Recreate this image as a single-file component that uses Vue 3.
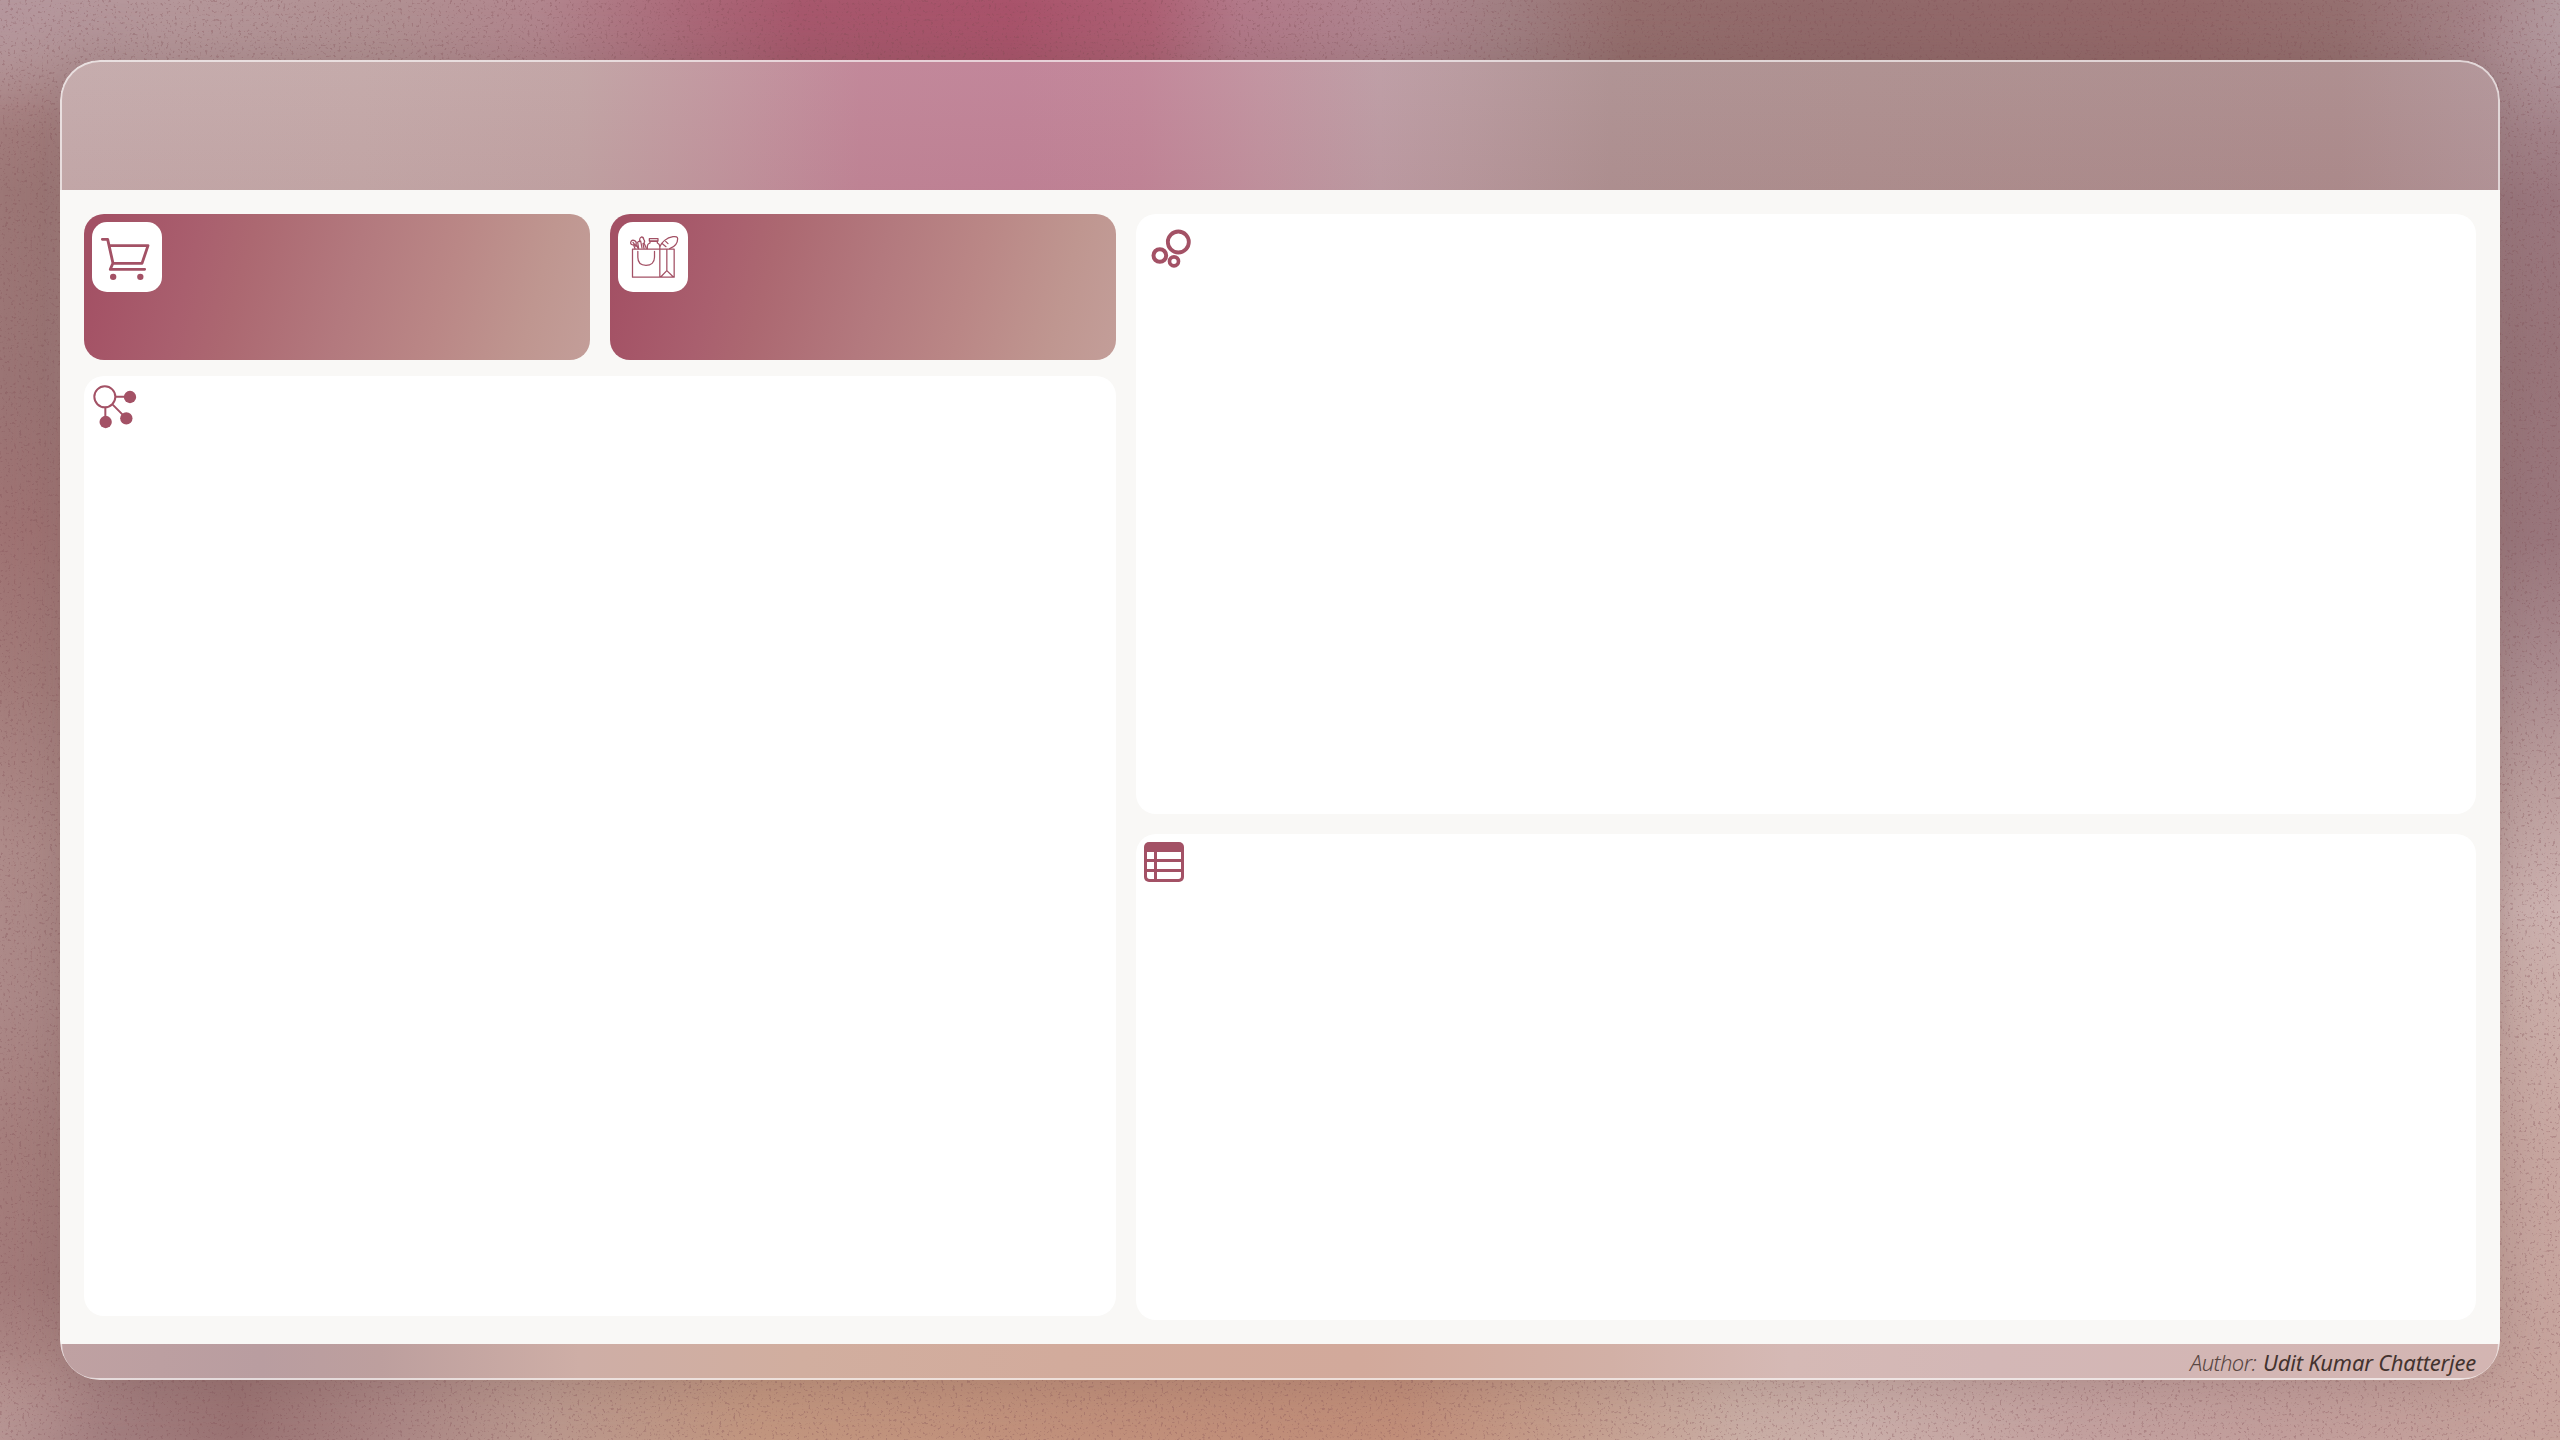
<script setup>
const accent = '#a35165'
</script>

<template>
  <div class="page">
    <div class="backdrop" aria-hidden="true">
      <div class="wash top"></div>
      <div class="wash bottom"></div>
      <div class="wash left"></div>
      <div class="wash right"></div>
      <svg class="grain" width="2560" height="1440">
        <filter id="grain" x="0" y="0" width="100%" height="100%" color-interpolation-filters="sRGB">
          <feTurbulence type="fractalNoise" baseFrequency="0.36" numOctaves="2" seed="4" />
          <feColorMatrix values="0 0 0 0 0.5  0 0 0 0 0.3  0 0 0 0 0.33  7 0 0 0 -4.2" />
        </filter>
        <rect width="2560" height="1440" filter="url(#grain)" />
      </svg>
    </div>

    <main class="panel">
      <header class="header"></header>
      <section class="body">
        <div class="column column-left">
          <div class="kpis">
            <article class="kpi">
              <div class="tile">
                <svg viewBox="36 51 210 210" width="70" height="70" fill="none" :stroke="accent" stroke-width="8.5" stroke-linecap="round" stroke-linejoin="round">
                  <path d="M67 103H83L99 175H186L204 122H88M98 176L91 193H194" />
                  <circle cx="99.500" cy="215.500" r="9.500" :fill="accent" stroke="none" />
                  <circle cx="181" cy="215.500" r="9.500" :fill="accent" stroke="none" />
                </svg>
              </div>
            </article>
            <article class="kpi">
              <div class="tile">
                <svg viewBox="39 51 210 210" width="70" height="70" fill="none" :stroke="accent" stroke-width="3.8" stroke-linecap="round" stroke-linejoin="round">
                  <path d="M82.500 132.500H207.500V216.500H82.500ZM164.500 122V216M185.500 133V197L167 216M185.500 197L205 216" />
                  <path d="M98.500 139V157C98.500 172 108 181 123 181S148.500 172 148.500 157V139" />
                  <path d="M127 131V124Q127 117 135 114V109H157V114Q163 117 164 122M133 101H159V108H133Z" />
                  <path d="M165 124C170 112 184 98 204 95Q218 93 218 101C218 115 207 126 194 131M182 109L189 116M173 117L183 125" />
                  <path d="M90 131L86 120Q76 120 77 112Q80 103 89 107Q96 111 93 118L99 130M84 112L93 124M101 131L98 112Q100 108 104 110Q103 98 109 96Q116 96 116 103Q121 108 117 114L124 130M107 108L111 129M114 116L117 130" />
                </svg>
              </div>
            </article>
          </div>
          <article class="card grow">
            <svg viewBox="12 18 198 192" width="66" height="64" fill="none" :stroke="accent" stroke-width="6">
              <circle cx="74.500" cy="80.500" r="31.500" />
              <path d="M106 80.500H150M76 112V150M98 104L139 145" />
              <g :fill="accent" stroke="none">
                <circle cx="150" cy="81" r="18.500" />
                <circle cx="77" cy="156" r="18.500" />
                <circle cx="139" cy="145" r="18.500" />
              </g>
            </svg>
          </article>
        </div>

        <div class="column column-right">
          <article class="card chart">
            <svg viewBox="18 27 222 213" width="74" height="71" fill="none" :stroke="accent">
              <circle cx="145" cy="111" r="31.500" stroke-width="11.500" />
              <circle cx="89.500" cy="151.500" r="19" stroke-width="12" />
              <circle cx="132" cy="169" r="13.500" stroke-width="11" />
            </svg>
          </article>
          <article class="card grow">
            <svg viewBox="18 27 192 183" width="64" height="61">
              <rect x="42" y="51" width="120" height="120" rx="15" :fill="accent" />
              <path fill="#fff" d="M51 81H72V102H51ZM81 81H153V102H81ZM51 111H72V132H51ZM81 111H153V132H81ZM51 141H72V162H59Q51 162 51 154ZM81 141H153V154Q153 162 145 162H81Z" />
            </svg>
          </article>
        </div>
      </section>
      <footer class="footer">
        <span class="label">Author:</span>
        <span class="name">Udit Kumar Chatterjee</span>
      </footer>
    </main>
  </div>
</template>

<style>
body {
  margin: 0;
  overflow: hidden;
}
</style>

<style scoped>
.page {
  position: relative;
  box-sizing: border-box;
  width: 2560px;
  height: 1440px;
  padding: 60px;
  overflow: hidden;
  background: #a88080;
}

.backdrop,
.wash,
.grain {
  position: absolute;
  inset: 0;
}

.wash.left {
  right: auto;
  width: 150px;
  background: linear-gradient(180deg, #b3949b 0, #b09090 50px, #a47e7e 110px, #9c7776 190px, #9b7575 380px, #9f7373 530px, #a37c7a 680px, #ae8b89 850px, #ac8988 1000px, #a57e7c 1150px, #a27a79 1280px, #ad8886 1370px, #b79593 1440px);
}

.wash.right {
  left: auto;
  width: 150px;
  background: linear-gradient(180deg, #b39a9f 0, #a98b91 80px, #9a777e 200px, #98757a 350px, #9a777d 540px, #a98a8e 660px, #bda09f 790px, #cdb2b0 910px, #cbaea9 1000px, #c8a7a1 1150px, #c6a39c 1440px);
}

.wash.top {
  bottom: auto;
  height: 400px;
  background: linear-gradient(90deg, #b5979d 0, #b5979a 180px, #b19193 390px, #b2868e 540px, #ab6979 690px, #a7586d 800px, #a9536b 1010px, #ad6074 1150px, #b27989 1240px, #af8690 1390px, #a07f82 1510px, #946e6d 1630px, #91696a 1850px, #94696a 2180px, #957070 2340px, #a58388 2480px, #b39a9f 2560px);
}

.wash.bottom {
  top: auto;
  height: 400px;
  background: linear-gradient(90deg, #b79593 0, #a37f80 100px, #9a7373 240px, #ab8785 400px, #ba988e 540px, #c2967f 760px, #c1907b 1100px, #c18e79 1400px, #c49b89 1540px, #c9ada4 1740px, #caaea9 1860px, #c3a19f 2080px, #c29e9b 2300px, #c6a39c 2560px);
}

.wash.left,
.wash.right {
  mask-image: linear-gradient(90deg, #000 30%, transparent), linear-gradient(180deg, transparent 0, #000 130px, #000 1350px, transparent 1440px);
  mask-composite: intersect;
}

.wash.right {
  mask-image: linear-gradient(270deg, #000 30%, transparent), linear-gradient(180deg, transparent 0, #000 130px, #000 1350px, transparent 1440px);
}

.grain {
  opacity: 0.3;
}

.panel {
  position: relative;
  display: flex;
  flex-direction: column;
  height: 1320px;
  border-radius: 40px;
  overflow: hidden;
  box-shadow: 0 0 54px rgba(105, 75, 72, 0.28);
}

.header,
.footer {
  flex: none;
  box-sizing: border-box;
  border: 2px solid rgba(255, 255, 255, 0.62);
  background-origin: border-box;
}

.header {
  height: 130px;
  border-bottom: 0;
  border-radius: 40px 40px 0 0;
  background-image:
    linear-gradient(180deg, rgba(255, 255, 255, 0.03), rgba(145, 85, 85, 0.05)),
    linear-gradient(90deg, #c4aaab 0, #c3a8a8 300px, #c1a3a4 520px, #c1939d 680px, #c08597 800px, #c08297 960px, #c18598 1080px, #c1929f 1200px, #bd9ca4 1320px, #b8999e 1400px, #ae9192 1550px, #ad8f8f 1800px, #ac8c8d 2280px, #b29599 2440px);
}

.body {
  display: flex;
  flex: 1;
  gap: 20px;
  padding: 24px;
  min-height: 0;
  background: #f9f8f6;
}

.column {
  display: flex;
  flex-direction: column;
}

.column-left {
  width: 1032px;
  gap: 16px;
  padding-bottom: 4px;
}

.column-right {
  flex: 1;
  gap: 20px;
}

.kpis {
  display: flex;
  gap: 20px;
}

.kpi {
  box-sizing: border-box;
  flex: 1;
  height: 146px;
  padding: 8px;
  border-radius: 20px;
  background: linear-gradient(105deg, #a35064 3%, #a95f6e 22%, #ac6871 32%, #b3797e 52%, #ba8786 70%, #bf9690 87%, #c39e99 100%);
}

.tile {
  width: 70px;
  height: 70px;
  border-radius: 15px;
  background: #fff;
}

svg {
  display: block;
}

.card {
  border-radius: 20px;
  background: #fff;
}

.card.grow {
  flex: 1;
}

.card.chart {
  height: 600px;
}

.footer {
  display: flex;
  align-items: center;
  justify-content: flex-end;
  gap: 7px;
  height: 36px;
  padding: 2px 22px 0 0;
  border-top: 0;
  border-radius: 0 0 40px 40px;
  background-image: linear-gradient(90deg, #bfa1a2 0, #b99da0 200px, #bd9f9e 320px, #ceaea6 520px, #d1ae9f 740px, #d2ab9c 1000px, #d2a99b 1300px, #d2b0a6 1550px, #d5b9b5 1730px, #d3b7b6 1930px, #d3b5b2 2440px);
  color: #43332f;
  font: italic 400 22px/30px "Noto Sans", "Open Sans", sans-serif;
  white-space: nowrap;
}

.label {
  font-weight: 300;
  letter-spacing: -0.6px;
  color: #594642;
}

.name {
  letter-spacing: -0.23px;
}
</style>
